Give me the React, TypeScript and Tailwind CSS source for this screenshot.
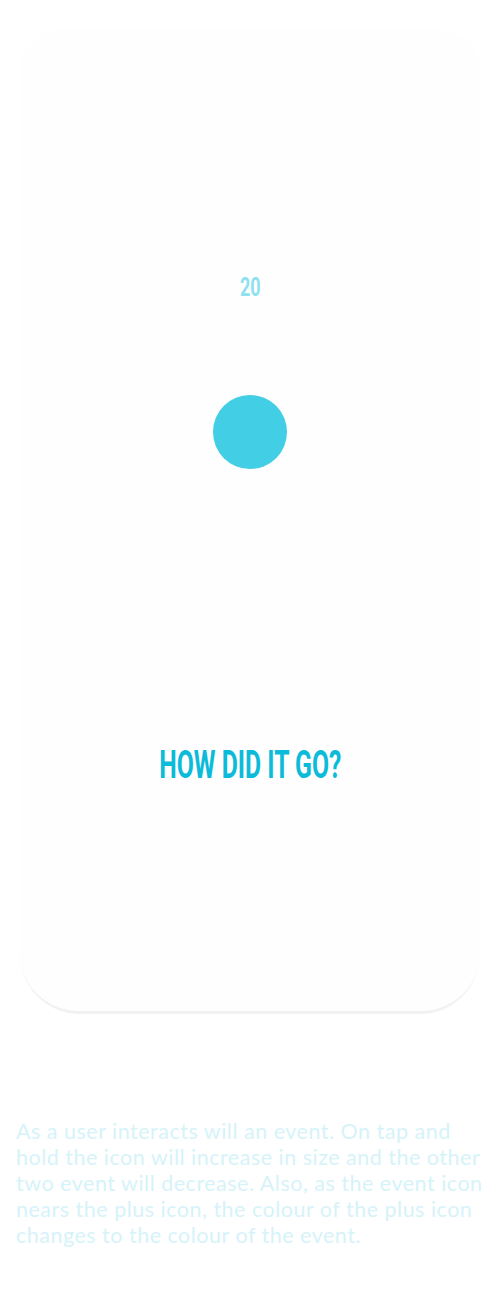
import React from "react";

export default function App() {
  return (
    <div className="w-[500px] min-h-[1300px] bg-white">
      <div className="px-[20px] pt-[30px]">
        <div className="h-[984px] rounded-t-[40px] rounded-b-[60px] bg-[#fefefe] border-b-[3px] border-[#f2f2f2] flex flex-col items-center">
          <div className="mt-[246px] text-[25px] leading-[24px] font-bold text-[#8fe0f0] font-[Roboto,sans-serif] scale-x-[0.72]">
            20
          </div>
          <div className="mt-[95px] w-[74px] h-[74px] rounded-full bg-[#42cee4]" />
          <h1 className="mt-[276px] text-[39px] leading-[40px] font-bold text-[#0bbbd9] font-[Roboto,sans-serif] whitespace-nowrap scale-x-[0.635]">
            HOW DID IT GO?
          </h1>
        </div>
      </div>
      <p className="mt-[104px] pl-[16px] pr-[8px] text-[21.5px] leading-[26px] tracking-[0.5px] text-[#d6f3fa] font-[Lato,sans-serif]">
        As a user interacts will an event. On tap and hold the icon will increase in size and the other two event will decrease. Also, as the event icon nears the plus icon, the colour of the plus icon changes to the colour of the event.
      </p>
    </div>
  );
}
